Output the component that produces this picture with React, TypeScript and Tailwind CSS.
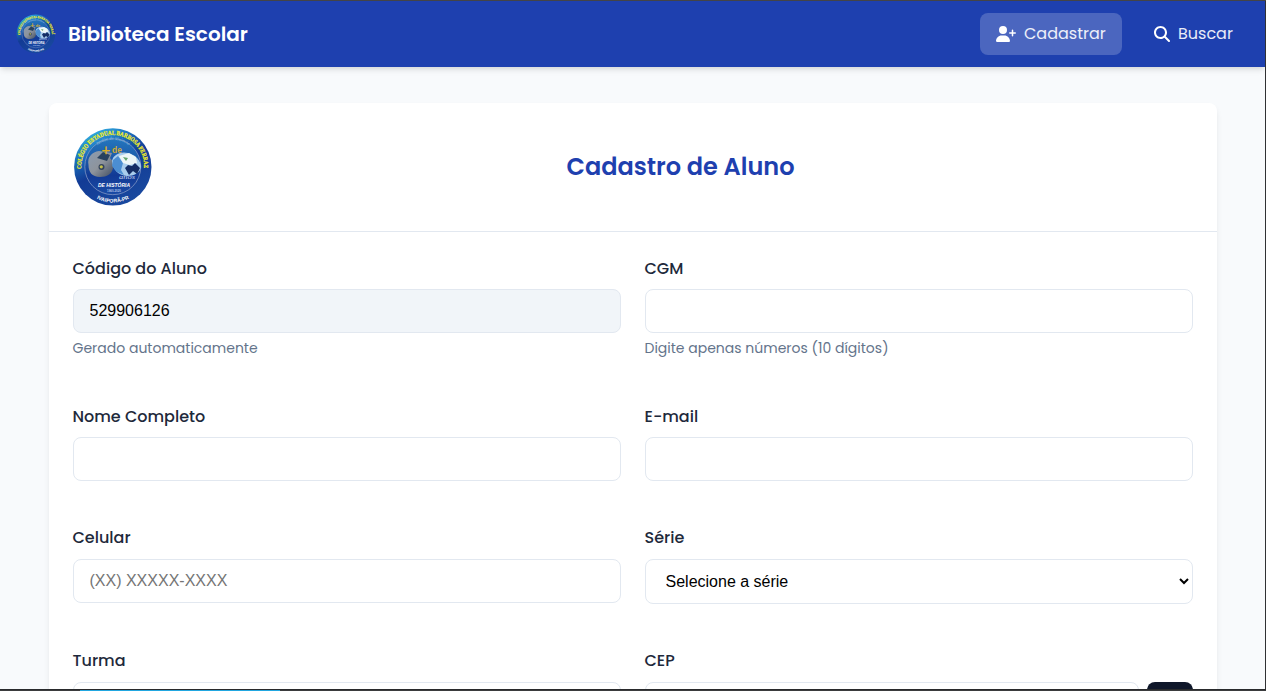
import type { ReactNode } from "react";
import { FaUserPlus, FaMagnifyingGlass } from "react-icons/fa6";

const geo = "font-[Poppins,Inter,sans-serif]";
const box = "block w-full rounded-lg border border-[#e2e8f0] px-4 font-['Liberation_Sans',Arial,sans-serif] text-base text-black outline-none";

function Seal({ className, id }: { className: string; id: string }) {
  return (
    <svg viewBox="-1 -1 80 80" className={className} aria-label="Colégio Estadual Barbosa Ferraz">
      <defs>
        <linearGradient id={id + "bg"} x1="0.15" y1="0.05" x2="0.65" y2="1">
          <stop offset="0" stopColor="#35b4e5" />
          <stop offset="0.25" stopColor="#1b70bd" />
          <stop offset="0.5" stopColor="#123b95" />
          <stop offset="1" stopColor="#19499f" />
        </linearGradient>
        <linearGradient id={id + "metal"} x1="0" y1="0" x2="1" y2="1">
          <stop offset="0" stopColor="#8a9bb0" />
          <stop offset="0.5" stopColor="#8e949c" />
          <stop offset="1" stopColor="#3f4c60" />
        </linearGradient>
        <linearGradient id={id + "inner"} x1="0" y1="0" x2="0" y2="1">
          <stop offset="0" stopColor="#2476bd" />
          <stop offset="0.4" stopColor="#1b57a8" />
          <stop offset="0.65" stopColor="#123a95" />
          <stop offset="1" stopColor="#1a4ba5" />
        </linearGradient>
        <path id={id + "top"} d="M7.5 42A31.5 31.5 0 1 1 70.1 42" />
        <path id={id + "jardim"} d="M17 24A26 26 0 0 1 61 24" />
        <path id={id + "bottom"} d="M12 62A35.3 35.3 0 0 0 66 62" />
      </defs>
      <circle cx="38.8" cy="38.9" r="38.7" fill={"url(#" + id + "bg)"} />
      <circle cx="38.8" cy="38.7" r="28" fill={"url(#" + id + "inner)"} stroke="#8196c4" strokeWidth="0.8" />
      <path d="M14.5 37C13 29 18 24 25 23L38 25L36 30C39 33 40 36 39 40C38 46 33 49 26 49C18 49 14.5 44 14.5 37z" fill={"url(#" + id + "metal)"} />
      <path d="M23 30L29 24L36 27L33 33z" fill="#29425f" />
      <circle cx="27.5" cy="39" r="3" fill="#35445e" />
      <circle cx="27.3" cy="38.8" r="1.6" fill="#c4c04a" />
      <path d="M38 33C39 27 46 23 54 25C62 27 67 33 67 39C66 45 60 48 53 48C44 47 39 42 38 33z" fill="#a9cdec" />
      <path d="M39 32L44 28L49 35L47 42L50 47L43 44L38 38z" fill="#4b8ed2" />
      <path d="M45 28L55 25L62 29L63 35L56 37L49 35z" fill="#edf6f7" />
      <path d="M51 40L54 37L58 38L61 35L66 40L63 46L59 43L55 47z" fill="#142d65" />
      <path d="M49 29L54 30L52 33z" fill="#63a66c" />
      <text fill="#f4ef23" stroke="#f4ef23" strokeWidth="0.25" fontSize="6.3" fontWeight="700" fontFamily="Liberation Serif, serif" textLength="103" lengthAdjust="spacingAndGlyphs">
        <textPath href={"#" + id + "top"} startOffset="1">COLÉGIO ESTADUAL BARBOSA FERRAZ</textPath>
      </text>
      <text fill="#9ccbe8" fontSize="4.4" fontStyle="italic" textAnchor="middle" fontFamily="Liberation Serif, serif">
        <textPath href={"#" + id + "jardim"} startOffset="50%">Jardim de Vivência</textPath>
      </text>
      <text x="27.5" y="26.6" fill="#deb024" stroke="#deb024" strokeWidth="0.3" fontSize="15" fontFamily="Liberation Sans, sans-serif">+</text>
      <text x="38" y="25" fill="#d0aa35" fontSize="8.5" fontWeight="700" fontFamily="Liberation Sans, sans-serif">de</text>
      <text x="45" y="51.3" fill="#c8d6ef" fontSize="6" fontStyle="italic" fontFamily="Liberation Serif, serif" textLength="16" lengthAdjust="spacingAndGlyphs">anos</text>
      <text x="24" y="59" fill="#ffffff" fontSize="5.8" fontStyle="italic" fontWeight="700" fontFamily="Liberation Sans, sans-serif" textLength="32" lengthAdjust="spacingAndGlyphs">DE HISTÓRIA</text>
      <text x="33" y="63.6" fill="#b6c7e9" fontSize="2.8" fontWeight="700" fontFamily="Liberation Sans, sans-serif" textLength="14" lengthAdjust="spacingAndGlyphs">1960-2020</text>
      <text fill="#ffffff" fontSize="5.2" fontWeight="700" textAnchor="middle" fontFamily="Liberation Sans, sans-serif">
        <textPath href={"#" + id + "bottom"} startOffset="50%">IVAIPORÃ-PR</textPath>
      </text>
    </svg>
  );
}

function Field({ label, hint, children }: { label: string; hint?: string; children: ReactNode }) {
  return (
    <div className="min-w-0">
      <label className={"mb-2 block whitespace-nowrap text-base/[25.6px] font-medium text-[#1e293b] " + geo}>{label}</label>
      {children}
      {hint && <p className={"mt-1 whitespace-nowrap text-sm/[22.4px] text-[#64748b] " + geo}>{hint}</p>}
    </div>
  );
}

export default function App() {
  return (
    <div className="flex h-[691px] w-full flex-col overflow-hidden bg-[#f8fafc]">
      <div className="h-px shrink-0 bg-[#444446]" />
      <div className="flex h-[688px] shrink-0 border-r border-[#303133]">
        <div className="flex min-w-0 flex-1 flex-col overflow-hidden">
          <header className={"z-10 flex h-[66px] shrink-0 items-center justify-between bg-[#1e40af] px-4 text-white shadow-[0_4px_6px_-1px_rgba(0,0,0,0.1),0_2px_4px_-1px_rgba(0,0,0,0.06)] " + geo}>
            <div className="flex items-center gap-3">
              <Seal id="nav" className="size-10 rounded-full" />
              <span className="whitespace-nowrap text-xl font-semibold">Biblioteca Escolar</span>
            </div>
            <nav className="flex gap-4">
              <a href="#cadastrar" className="flex h-[42px] w-[142px] items-center gap-2 rounded-lg bg-white/20 px-4 text-white/90">
                <FaUserPlus className="h-4 w-5 shrink-0 text-white" />
                <span className="whitespace-nowrap">Cadastrar</span>
              </a>
              <a href="#buscar" className="flex h-[42px] w-[111px] items-center gap-2 rounded-lg px-4 text-white/90">
                <FaMagnifyingGlass className="size-4 shrink-0 text-white" />
                <span className="whitespace-nowrap">Buscar</span>
              </a>
            </nav>
          </header>
          <main className="mx-auto mt-9 h-[700px] w-[1168px] shrink-0 rounded-lg bg-white shadow-[0_4px_6px_-1px_rgba(0,0,0,0.1)]">
            <div className="flex h-[129px] items-center border-b border-[#e2e8f0] px-6">
              <Seal id="card" className="size-20 shrink-0" />
              <h1 className={"flex-1 whitespace-nowrap pl-4 text-center text-2xl font-semibold text-[#1e40af] " + geo}>Cadastro de Aluno</h1>
            </div>
            <form className="grid grid-cols-2 grid-rows-[148px_121.6px_122.9px_120px] gap-x-6 px-6 pt-[23.8px]">
              <Field label="Código do Aluno" hint="Gerado automaticamente">
                <input readOnly value="529906126" className={box + " h-11 bg-[#f1f5f9]"} />
              </Field>
              <Field label="CGM" hint="Digite apenas números (10 dígitos)">
                <input className={box + " h-11"} />
              </Field>
              <Field label="Nome Completo">
                <input className={box + " h-11"} />
              </Field>
              <Field label="E-mail">
                <input className={box + " h-11"} />
              </Field>
              <Field label="Celular">
                <input placeholder="(XX) XXXXX-XXXX" className={box + " h-11 placeholder:text-[#757575]"} />
              </Field>
              <Field label="Série">
                <select className={box + " h-[45px] bg-white"}>
                  <option>Selecione a série</option>
                </select>
              </Field>
              <Field label="Turma">
                <input className={box + " h-11"} />
              </Field>
              <Field label="CEP">
                <div className="flex gap-2">
                  <input className={box + " h-11"} />
                  <button type="button" aria-label="Buscar CEP" className="h-11 w-[46px] shrink-0 rounded-lg bg-[#0f172a]" />
                </div>
              </Field>
            </form>
          </main>
        </div>
      </div>
      <div className="h-px shrink-0 bg-[#292a2c]" />
      <div className="flex h-px shrink-0 bg-[#3b3c3e] pl-20">
        <div className="w-[200px] bg-[#22a7e0]" />
      </div>
    </div>
  );
}
